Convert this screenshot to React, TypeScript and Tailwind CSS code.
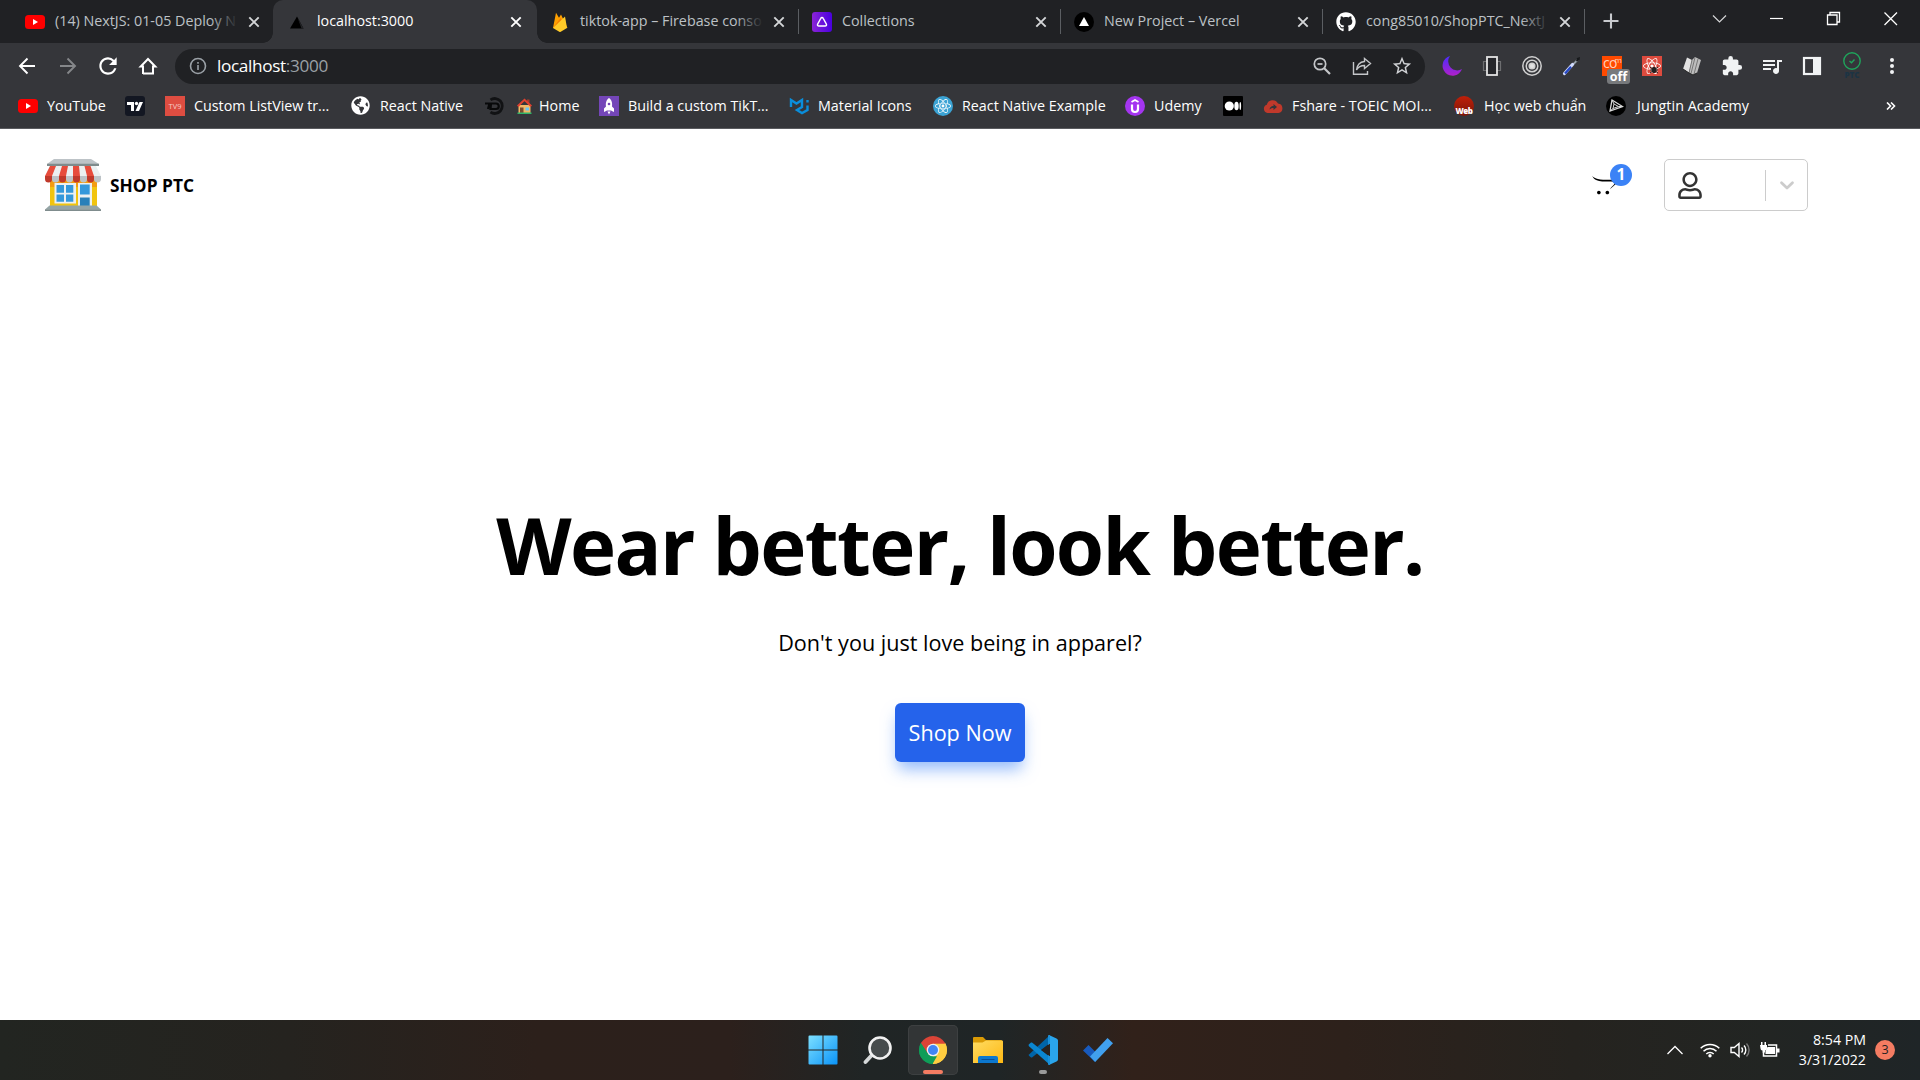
import type { ReactNode } from 'react';
import { FaGithub, FaOpencart, FaReact, FaRegUser, FaGlobeAmericas } from 'react-icons/fa';
import { MdExtension, MdOutlineQueueMusic, MdStarOutline, MdRefresh } from 'react-icons/md';

function YouTube() {
  return (
    <svg viewBox="0 0 20 20" className="size-5">
      <rect y="3" width="20" height="14" rx="3.5" fill="#f00" />
      <path d="M8 7v6l5-3z" fill="#fff" />
    </svg>
  );
}

function Firebase() {
  return (
    <svg viewBox="0 0 20 20" className="size-5">
      <path d="M3 16 6 0.8l3 5L11 2.6 17.5 16z" fill="#ffa000" />
      <path d="m3 16 7.500-10 2 3z" fill="#f57c00" />
      <path d="M3 16 15 4.500 17 16l-7 4.200z" fill="#ffca28" />
    </svg>
  );
}

function Appwrite() {
  return (
    <svg viewBox="0 0 20 20" className="size-5">
      <defs>
        <linearGradient id="collections">
          <stop stopColor="#8a24d6" />
          <stop offset="1" stopColor="#4a00e0" />
        </linearGradient>
      </defs>
      <rect width="20" height="20" rx="3" fill="url(#collections)" />
      <path d="M10 5.5c.7 0 1 .4 1.3 1l3 5.500c.6 1.200 0 2-1.200 2H6.900c-1.200 0-1.800-.8-1.200-2l3-5.500c.3-.6.600-1 1.300-1z" fill="none" stroke="#fff" strokeWidth="1.5" />
    </svg>
  );
}

function Triangle({ disc }: { disc?: boolean }) {
  return (
    <svg viewBox="0 0 20 20" className="size-5">
      {disc ? (
        <>
          <circle cx="10" cy="10" r="10" fill="#000" />
          <path d="m10 5 5 9H5z" fill="#fff" />
        </>
      ) : (
        <>
          <path d="M10 4.500 16.500 16.500H3z" fill="#000" />
          <path d="m10.500 5.500 6 11h-2z" fill="#232427" />
        </>
      )}
    </svg>
  );
}

function Cross({ color }: { color: string }) {
  return (
    <svg viewBox="0 0 12 12" className="size-3" stroke={color} strokeWidth="1.9">
      <path d="m1.300 1.300 9.400 9.400m0-9.400-9.400 9.400" />
    </svg>
  );
}

function Tab({ icon, title, active, fade, divider }: { icon: ReactNode; title: string; active?: boolean; fade?: boolean; divider?: boolean }) {
  return (
    <div className={active ? 'relative -ml-px flex h-[43px] w-[264px] items-center rounded-t-[10px] bg-[#35363a] pl-3.5' : 'relative flex h-[43px] w-[262px] items-center pl-[13px]'}>
      {active && (
        <>
          <div className="absolute -left-2.5 bottom-0 size-2.5 bg-[radial-gradient(circle_at_0_0,#202124_9.500px,#35363a_10px)]" />
          <div className="absolute -right-2.5 bottom-0 z-10 size-2.5 bg-[radial-gradient(circle_at_100%_0,#202124_9.500px,#35363a_10px)]" />
        </>
      )}
      {icon}
      <div className={`relative -top-px ml-2.5 w-[183px] whitespace-nowrap text-[14.300px] ${active ? 'text-white' : 'text-[#bdc1c6]'}`}>
        {title}
        {fade && <div className="absolute inset-y-0 right-0 w-7 bg-linear-to-r from-transparent to-[#202124]" />}
      </div>
      <div className="ml-[10px]">
        <Cross color={active ? '#fff' : '#d4d6d8'} />
      </div>
      {divider && <div className="absolute right-0 top-[9px] h-[25px] w-px bg-[#5b5e62]" />}
    </div>
  );
}

function TabStrip() {
  return (
    <div className="flex h-[43px] bg-[#202124] pl-3">
      <Tab icon={<YouTube />} title="(14) NextJS: 01-05 Deploy N" fade />
      <Tab icon={<Triangle />} title="localhost:3000" active />
      <Tab icon={<Firebase />} title="tiktok-app – Firebase conso" fade divider />
      <Tab icon={<Appwrite />} title="Collections" divider />
      <Tab icon={<Triangle disc />} title="New Project – Vercel" divider />
      <Tab icon={<FaGithub className="size-5 text-white" />} title="cong85010/ShopPTC_NextJ" fade divider />
      <svg viewBox="0 0 16 16" className="ml-[18px] mt-[13px] size-4" stroke="#c8cace" strokeWidth="2.100">
        <path d="M8 .5v15M.5 8h15" />
      </svg>
      <div className="ml-auto flex h-[38px] items-center pr-px">
        <svg viewBox="0 0 57 38" className="w-[57px]" fill="none" stroke="#d5d6d7" strokeWidth="1.200">
          <path d="m22 15.500 6.500 6.500 6.500-6.500" />
        </svg>
        <svg viewBox="0 0 57 38" className="w-[57px]" fill="none" stroke="#fff" strokeWidth="1.200">
          <path d="M22 18.500h13" />
        </svg>
        <svg viewBox="0 0 57 38" className="w-[57px]" fill="none" stroke="#fff" strokeWidth="1.300">
          <path d="M22.500 15h9.500v9.500h-9.500zM25 15v-2.500h9.500V22H32" />
        </svg>
        <svg viewBox="0 0 57 38" className="w-[57px]" fill="none" stroke="#fff" strokeWidth="1.300">
          <path d="m22.500 12.500 12.500 12.500m0-12.500L22.500 25" />
        </svg>
      </div>
    </div>
  );
}

function Slot({ children }: { children: ReactNode }) {
  return <div className="relative flex h-9 w-10 shrink-0 items-center justify-center">{children}</div>;
}

function Toolbar() {
  return (
    <div className="flex h-[46px] items-center bg-[#35363a] pl-2 pr-[7px]">
      <Slot>
        <svg viewBox="0 0 20 20" className="size-5" fill="none" stroke="#fff" strokeWidth="1.900"><path d="M17 10H2m7.500-7.500L2 10l7.500 7.500" /></svg>
      </Slot>
      <Slot>
        <svg viewBox="0 0 20 20" className="size-5" fill="none" stroke="#85878a" strokeWidth="1.900"><path d="M2 10h15M9.500 2.500 17 10l-7.500 7.500" /></svg>
      </Slot>
      <Slot><MdRefresh className="size-[26px] text-white" /></Slot>
      <Slot>
        <svg viewBox="0 0 20 20" className="size-5" fill="none" stroke="#fff" strokeWidth="2"><path d="M5 18V10.500H2.700L10 3l7.300 7.500H15V17.500H5z" /></svg>
      </Slot>
      <div className="ml-[7px] flex h-[35px] w-[1250px] items-center rounded-full bg-[#202124] pl-3.5 pr-[3px]">
        <svg viewBox="0 0 18 18" className="size-[18px]" fill="none" stroke="#9aa0a6" strokeWidth="1.600"><circle cx="9" cy="9" r="7.500" /><path d="M9 8v5M9 5v1.700" /></svg>
        <span className="ml-[10px] text-[17.200px] tracking-[-0.350px] text-white">localhost<span className="text-[#9aa0a6]">:3000</span></span>
        <div className="ml-auto flex">
          <Slot>
            <svg viewBox="0 0 20 20" className="size-5" fill="none" stroke="#c4c6c9" strokeWidth="1.700"><circle cx="8" cy="8" r="5.700" /><path d="m12 12 6 6" strokeWidth="2.200" /><path d="M5.500 8h5" /></svg>
          </Slot>
          <Slot>
            <svg viewBox="0 0 20 20" className="size-5" fill="none" stroke="#c4c6c9" strokeWidth="1.400"><path d="M1.500 6v12.300H15.500V15M12.500 2.500l6 5-6 5V9.500C9 9.500 6.500 10.500 4.500 14 5 9.500 7.500 6 12.500 5.500z" /></svg>
          </Slot>
          <Slot><MdStarOutline className="size-[22px] text-[#d0d2d5]" /></Slot>
        </div>
      </div>
      <div className="ml-[7px] flex">
        <Slot>
          <svg viewBox="0 0 20 20" className="size-5"><defs><linearGradient id="moon" x2="0" y2="1"><stop stopColor="#4b2cff" /><stop offset="1" stopColor="#b020c8" /></linearGradient></defs><path d="M8 0a10 10 0 1 0 12 13A9 9 0 0 1 8 0z" fill="url(#moon)" /></svg>
        </Slot>
        <Slot>
          <svg viewBox="0 0 20 20" className="size-5" fill="none"><path d="M5 5.500H1.500v9H5m10-9h3.500v9H15" stroke="#6d6e70" strokeWidth="1.200" /><rect x="5" y="1" width="10" height="18" fill="#25262a" stroke="#e4e4e4" strokeWidth="1.800" /></svg>
        </Slot>
        <Slot>
          <svg viewBox="0 0 20 20" className="size-5" fill="none" stroke="#d0d0d0" strokeWidth="1.500"><circle cx="10" cy="10" r="9.200" /><circle cx="10" cy="10" r="5.800" /><circle cx="10" cy="10" r="2.800" fill="#e2e2e2" /></svg>
        </Slot>
        <Slot>
          <svg viewBox="0 0 20 20" className="size-5"><path d="m11 8.500 5-5" stroke="#98a3ab" strokeWidth="1.800" /><path d="m14 5 1-3 3-1-.500 3-2.500 1.500z" fill="#17191b" /><path d="m2.500 17.500 8-9" stroke="#d2dcff" strokeWidth="3.200" strokeLinecap="round" /><path d="m3 17.500 6-6.800" stroke="#2447c5" strokeWidth="2.200" /></svg>
        </Slot>
        <Slot>
          <div className="relative size-5 bg-[#ff4a00] pl-px text-[14px] leading-[14px] tracking-[-0.800px] text-[#ffd0bd]">
            co
            <span className="absolute right-px top-0 text-[8px] leading-[8px]">m</span>
          </div>
          <div className="absolute left-[15px] top-[21px] h-[15px] w-[23px] rounded-[3px] bg-[#77797c] text-center text-[12.500px] font-bold leading-[15px] text-white">off</div>
        </Slot>
        <Slot>
          <div className="relative flex size-5 items-center justify-center bg-[#dd4b3e]">
            <FaReact className="size-[18px] text-white" />
            <svg viewBox="0 0 10 10" className="absolute bottom-0.5 right-[3px] size-2.5" stroke="#222" strokeWidth="1"><ellipse cx="5" cy="6" rx="2" ry="2.800" fill="#222" /><path d="m1 3 8 6M9 3 1 9M1 6h8" /></svg>
          </div>
        </Slot>
        <Slot>
          <svg viewBox="0 0 20 20" className="size-5"><path d="M5 1.500 10 4 7 17l-6-4z" fill="#e3e3e3" /><path d="m10 4 3-3 6 3-4 13-4 2-4-2z" fill="#bdbdbd" /><path d="m13 1.500-4 16M16 3l-4 15M10 4 7 17" stroke="#777" fill="none" /><path d="m1 13 6 4 4 2 4-2" stroke="#222" fill="none" /></svg>
        </Slot>
        <Slot><MdExtension className="size-[22px] text-[#f1f3f4]" /></Slot>
        <Slot><MdOutlineQueueMusic className="size-6 text-[#f1f3f4]" /></Slot>
        <Slot>
          <svg viewBox="0 0 20 20" className="size-5"><rect x="2" y="2" width="16" height="16" fill="none" stroke="#f1f3f4" strokeWidth="2.200" /><path d="M11 2h7v16h-7z" fill="#f1f3f4" /></svg>
        </Slot>
        <Slot>
          <div className="-mt-0.5 flex flex-col items-center">
            <svg viewBox="0 0 18 18" className="size-[18px]" fill="none" stroke="#1fa45b" strokeWidth="1.400"><circle cx="9" cy="9" r="8.200" /><path d="m6.500 9 2 1.800 3-3.300" /></svg>
            <span className="mt-px text-[8px] font-extrabold leading-[8px] text-[#1c3444]">PTC</span>
          </div>
        </Slot>
        <Slot>
          <svg viewBox="0 0 4 18" className="h-[18px] w-1" fill="#f1f3f4"><circle cx="2" cy="3" r="2" /><circle cx="2" cy="9" r="2" /><circle cx="2" cy="15" r="2" /></svg>
        </Slot>
      </div>
    </div>
  );
}

function Mark({ icon, width, children }: { icon: ReactNode; width: string; children?: ReactNode }) {
  return (
    <div className={`flex shrink-0 items-center whitespace-nowrap ${width}`}>
      <div className="mr-[9px] size-5">{icon}</div>
      {children}
    </div>
  );
}

function Bookmarks() {
  return (
    <div className="flex h-10 items-center border-b border-[#5a5b5f] bg-[#35363a] pb-[5px] pl-[18px] text-[14.300px] text-white">
      <Mark width="w-[107px]" icon={<YouTube />}>YouTube</Mark>
      <Mark width="w-10" icon={
        <svg viewBox="0 0 20 20" className="size-5"><rect width="20" height="20" rx="3" fill="#131722" /><path d="M2 6h7v9H6V9H2zM14.500 6H18l-4 9h-3.500z" fill="#fff" /><circle cx="11.500" cy="7.500" r="1.700" fill="#fff" /></svg>
      } />
      <Mark width="w-[186px]" icon={<div className="size-5 bg-[#de4d41] text-center text-[7.500px] leading-5 text-[#f6cbc7]">TV9</div>}>Custom ListView tr...</Mark>
      <Mark width="w-[134px]" icon={<FaGlobeAmericas className="size-[19px] text-white" />}>React Native</Mark>
      <Mark width="w-8" icon={
        <svg viewBox="0 0 20 20" className="size-5" fill="none"><path d="M5.500 3.800a7.500 7.500 0 1 1 0 12.400" stroke="#111214" strokeWidth="2.800" /><path d="M0 7.500h4.500l-1.500 5.500M6 7.500h5a2.700 2.700 0 0 1 0 5.500H5.500z" stroke="#08090a" strokeWidth="2.200" /></svg>
      } />
      <div className="flex w-[82px] shrink-0 items-center">
        <svg viewBox="0 0 15 16" className="mr-[7px] h-4 w-[15px]"><path d="M1.500 7h12v8h-12z" fill="#f2b765" /><path d="M10 1.500h2.500v4H10z" fill="#a33b2b" /><path d="M.7 8.300 7.500 1.800l6.800 6.500" fill="none" stroke="#e0402f" strokeWidth="2" /><path d="M3 9.500h3.500V15H3z" fill="#7b4a2d" /><path d="M8.500 9.500H12v3H8.500z" fill="#67c5f5" /><path d="M.5 14.500h14V16H.5z" fill="#2fb56a" /></svg>
        Home
      </div>
      <Mark width="w-[190px]" icon={
        <svg viewBox="0 0 20 20" className="size-5"><path d="M0 0h20v20H0z" fill="#7446b8" /><path d="M10 2c3 2 3.500 5.500 3 8.500l2 2V16l-3-1.500H8L5 16v-3.500l2-2C6.500 7.500 7 4 10 2zM8.500 15.500h3L10 18.500z" fill="#fff" /><circle cx="10" cy="8" r="1.300" fill="#7446b8" /></svg>
      }>Build a custom TikT...</Mark>
      <Mark width="w-36" icon={
        <svg viewBox="0 0 20 20" className="size-5" fill="none" stroke="#0a8edb" strokeWidth="2.400"><path d="M2 11V4l5.500 3.500L13 4v7l-5 3 5 3 5.500-3V9.500" /><path d="M18.500 4v2.500" /></svg>
      }>Material Icons</Mark>
      <Mark width="w-48" icon={<div className="flex size-5 items-center justify-center rounded-full bg-[#3ba3d4]"><FaReact className="size-4 text-white" /></div>}>React Native Example</Mark>
      <Mark width="w-[98px]" icon={
        <svg viewBox="0 0 20 20" className="size-5" fill="none" stroke="#fff"><circle cx="10" cy="10" r="10" fill="#a435f0" stroke="none" /><path d="M7 8.500v4.500a3 3 0 0 0 6 0V8.500" strokeWidth="2.200" /><path d="m6.500 6 3.500-2 3.500 2" strokeWidth="1.800" /></svg>
      }>Udemy</Mark>
      <Mark width="w-10" icon={
        <svg viewBox="0 0 20 20" className="size-5"><rect width="20" height="20" rx="1" fill="#000" /><circle cx="6.300" cy="10" r="4.600" fill="#fff" /><ellipse cx="13.500" cy="10" rx="2.200" ry="4.300" fill="#fff" /><ellipse cx="17.300" cy="10" rx=".8" ry="3.900" fill="#fff" /></svg>
      } />
      <Mark width="w-[191px]" icon={
        <svg viewBox="0 0 20 20" className="size-5"><path d="M4.500 17a4.300 4.300 0 0 1-.700-8.300A6 6 0 0 1 15 7.500 4.800 4.800 0 0 1 15.500 17z" fill="#c0392b" /><path d="M6.500 13.500c.5-2.500 2-3.500 4-3.500V8l3.500 3-3.500 3v-2c-1.500 0-3 .3-4 1.500z" fill="#35363a" /></svg>
      }>Fshare - TOEIC MOI...</Mark>
      <Mark width="w-[152px]" icon={
        <div className="flex size-5 items-end justify-center rounded-full bg-linear-to-b from-[#c01f08] to-[#7c1608]"><span className="text-[8px] font-extrabold leading-[11px] tracking-[-0.500px] text-white">Web</span></div>
      }><span className="pl-px">Học web chuẩn</span></Mark>
      <Mark width="w-[200px]" icon={
        <svg viewBox="0 0 20 20" className="size-5" fill="none" stroke="#d8d8d8" strokeWidth="1.300"><circle cx="10" cy="10" r="10" fill="#000" stroke="none" /><path d="m6 4 10.500 6.500L4 15z" /><path d="m8 8 4.500 2.500L7 12.500zM6 4l2 4m8.500 2.500h-4M4 15l3-2.500" strokeWidth="1" /></svg>
      }><span className="pl-0.5 tracking-[0.050px]">Jungtin Academy</span></Mark>
      <svg viewBox="0 0 10 8" className="ml-auto mr-6 h-2 w-2.5" fill="none" stroke="#fff" strokeWidth="1.600"><path d="m1 .5 3.500 3.500L1 7.500M5 .5 8.500 4 5 7.500" /></svg>
    </div>
  );
}

function Store() {
  return (
    <svg viewBox="0 0 56 52" className="h-[52px] w-14">
      <path d="M5 20h47v27H5z" fill="#f1c40f" />
      <path d="M5 20h47v8H5z" fill="#f39c12" />
      <path d="M9.500 24H31v20.500H9.500z" fill="#ecf0f1" />
      <path d="M11.500 26h7.500v7.700h-7.500zm9.500 0h7.300v7.700H21zm-9.500 9.400h7.500v7.300h-7.500zm9.500 0h7.300v7.300H21z" fill="#3498db" />
      <path d="M33 24h14v23H33z" fill="#ecf0f1" />
      <path d="M35 25.500h9.700v10H35z" fill="#3498db" />
      <path d="M35 38.500h9.700V47H35z" fill="#2980b9" />
      <path d="M4.500 46.500h47L56 50.500H0z" fill="#95a5a6" />
      <path d="M0 50.200h56V52H0z" fill="#7f8c8d" />
      <path d="M9 0h37l8 5H2z" fill="#bdc3c7" />
      <path d="M2 4.800h52V7H2z" fill="#7f8c8d" />
      <path d="M5 7h46l5 10H0z" fill="#ecf0f1" />
      <path d="M5 7h6L7 17H0zM17 7h6l-2 10h-7zM28 7h6l1 10h-7zM39.500 7h6L49 17h-7z" fill="#e74c3c" />
      <path d="M0 17h7v3a3.500 3.500 0 0 1-7 0zM14 17h7v3a3.500 3.500 0 0 1-7 0zM28 17h7v3a3.500 3.500 0 0 1-7 0zM42 17h7v3a3.500 3.500 0 0 1-7 0z" fill="#c0392b" />
      <path d="M7 17h7v3a3.500 3.500 0 0 1-7 0zM21 17h7v3a3.500 3.500 0 0 1-7 0zM35 17h7v3a3.500 3.500 0 0 1-7 0zM49 17h7v3a3.500 3.500 0 0 1-7 0z" fill="#bdc3c7" />
    </svg>
  );
}

function Page() {
  return (
    <div className="flex flex-1 flex-col bg-white text-black">
      <header className="mt-[30px] flex h-[52px] items-center pl-[45px] pr-28">
        <Store />
        <span className="ml-[9px] pt-px text-[17.300px] font-bold tracking-[0.050px]">SHOP PTC</span>
        <div className="relative ml-auto mr-[46px] h-[26px] w-[26px]">
          <FaOpencart className="size-[26px]" />
          <div className="absolute left-[18px] top-[-8px] flex size-[22px] items-center justify-center rounded-full bg-[#3b82f6] text-[15.500px] font-bold text-white">1</div>
        </div>
        <div className="flex h-[52px] w-36 items-center rounded-[5px] border border-[#ccc] pl-[13px]">
          <FaRegUser className="h-[27px] w-6 text-[#333]" />
          <div className="ml-auto h-[31px] w-px bg-[#ccc]" />
          <svg viewBox="0 0 20 20" className="ml-[10px] mr-[9px] size-[22px]" fill="none" stroke="#ccc" strokeWidth="2.500" strokeLinecap="round" strokeLinejoin="round"><path d="m5 8 5 4.800L15 8" /></svg>
        </div>
      </header>
      <main className="flex flex-col items-center">
        <h1 className="mt-[284px] whitespace-nowrap text-[78px] font-bold leading-[100px] tracking-[-1.600px]">Wear better, look better.</h1>
        <p className="mt-[33px] text-[21.600px] leading-[30px]">Don&apos;t you just love being in apparel?</p>
        <button className="mt-[45px] h-[59px] w-[130px] whitespace-nowrap rounded-md bg-[#2563eb] pt-0.5 text-[21.600px] text-white shadow-[0_10px_16px_-3px_rgba(59,130,246,0.550)]">Shop Now</button>
      </main>
    </div>
  );
}

function TaskSlot({ children, active, marker }: { children: ReactNode; active?: boolean; marker?: string }) {
  return (
    <div className={`relative mx-[2.500px] flex size-[50px] items-center justify-center rounded-[5px] ${active ? 'bg-[#323536] ring-1 ring-inset ring-[#3d4041]' : ''}`}>
      {children}
      {marker && <div className={`absolute bottom-px h-1 rounded-full ${marker}`} />}
    </div>
  );
}

function Taskbar() {
  return (
    <div className="flex h-[60px] items-center bg-[linear-gradient(90deg,#222521_0%,#25231f_15%,#2c201b_28%,#2c201c_38%,#202525_45%,#1f2526_52%,#31211a_59%,#2d211b_70%,#25231f_82%,#222523_92%,#1f2527_100%)] text-white">
      <div className="ml-[795.500px] flex">
        <TaskSlot>
          <svg viewBox="0 0 30 30" className="size-[30px]"><defs><linearGradient id="win" x2="1" y2="1"><stop stopColor="#7de0ff" /><stop offset="1" stopColor="#0a93f8" /></linearGradient></defs><path d="M.5 1.500a1 1 0 0 1 1-1h13v14H.500zM15.500.500h13a1 1 0 0 1 1 1v13h-14zM.500 15.500h14v14h-13a1 1 0 0 1-1-1zM15.500 15.500h14v13a1 1 0 0 1-1 1h-13z" fill="url(#win)" /></svg>
        </TaskSlot>
        <TaskSlot>
          <svg viewBox="0 0 30 30" className="size-[30px]" fill="none"><path d="m8.500 20.500-6 6.500" stroke="#d6d9da" strokeWidth="3.800" strokeLinecap="round" /><circle cx="17" cy="13" r="10.500" fill="#464b4c" stroke="#f1f1f1" strokeWidth="2.600" /></svg>
        </TaskSlot>
        <TaskSlot active marker="w-5 bg-[#f47c62]">
          <svg viewBox="0 0 28 28" className="size-7">
            <path d="M14 14 1.880 7A14 14 0 0 1 26.120 7z" fill="#db4437" />
            <path d="M14 14 26.120 7A14 14 0 0 1 14 28z" fill="#ffcd40" />
            <path d="M14 14v14A14 14 0 0 1 1.880 7z" fill="#0f9d58" />
            <path d="M14 7.700h12.500L26.120 7h-24.300L8.500 17.200z" fill="#db4437" />
            <path d="m19.500 17.200-6 10.800H14A14 14 0 0 0 26.500 7.700H14z" fill="#ffcd40" />
            <path d="m1.880 7 6.600 10.200L14 20.300h4L13.500 28A14 14 0 0 1 1.880 7z" fill="#0f9d58" />
            <circle cx="14" cy="14" r="6.300" fill="#f1f1f1" />
            <circle cx="14" cy="14" r="5" fill="#4285f4" />
          </svg>
        </TaskSlot>
        <TaskSlot>
          <svg viewBox="0 0 30 28" className="h-7 w-[30px]"><defs><linearGradient id="folder" x2="1" y2="1"><stop stopColor="#ffdc62" /><stop offset="1" stopColor="#fdb813" /></linearGradient></defs><path d="M0 2a1 1 0 0 1 1-1h9l3 3h15a1 1 0 0 1 1 1v5H0z" fill="#d99a05" /><path d="M0 6.500h9.500L13 4.500h16a1 1 0 0 1 1 1V27H0z" fill="url(#folder)" /><path d="M5 27v-5a2 2 0 0 1 2-2h16a2 2 0 0 1 2 2v5z" fill="#0c78cf" /><path d="M8.500 23.500h13" stroke="#074f98" /></svg>
        </TaskSlot>
        <TaskSlot marker="w-2 bg-[#9a9a9a]">
          <svg viewBox="0 0 30 30" className="size-[30px]"><path d="M1 19.500 22 0v8L4 22.500H3l-2.300-2z" fill="#0065a9" /><path d="M.700 9.500 3 7.500h1L22 22v8L.700 11z" fill="#0a86d1" /><path d="m21.500.200 7 3.300c1 .5 1.500 1.200 1.500 2.200v18.600c0 1-.5 1.700-1.500 2.200l-7 3.300c-.8.300-1.300.200-1.300-.6V.800c0-.7.500-.9 1.300-.6z" fill="#2aa5ec" /><path d="M22 8.500v13L13 15z" fill="#272320" /><path d="M20.200 1.500 22 .2v8.300l-1.800 1.300zM20.200 20.200l1.800 1.300V30l-1.800-1.500z" fill="#1a8fd8" /></svg>
        </TaskSlot>
        <TaskSlot>
          <svg viewBox="0 0 30 26" className="h-[26px] w-[30px]"><path d="m0 13.500 5.500-5.500L15 17.500l-3 7.500z" fill="#185abd" /><path d="m7 19.500 17.500-18.500 5.500 5.300L12.200 25z" fill="#41a0ee" /></svg>
        </TaskSlot>
      </div>
      <div className="ml-auto flex items-center pr-[25px]">
        <svg viewBox="0 0 16 10" className="mr-[17px] h-2.5 w-4" fill="none" stroke="#fff" strokeWidth="1.300"><path d="m.5 9 7.500-7.500L15.500 9" /></svg>
        <svg viewBox="0 0 20 16" className="mr-[10px] h-4 w-5" fill="none" stroke="#fff" strokeWidth="1.500"><path d="M.7 6.300a13 13 0 0 1 18.600 0M3.500 9.200a9 9 0 0 1 13 0M6.300 12a5.200 5.200 0 0 1 7.400 0" /><circle cx="10" cy="13.800" r="1.700" fill="#fff" stroke="none" /></svg>
        <svg viewBox="0 0 20 18" className="mr-[10px] h-[18px] w-5" fill="none" stroke="#fff" strokeWidth="1.400"><path d="M1 6.500h3.300L9 2.500v13l-4.700-4H1z" /><path d="M11.500 6.500a3.500 3.500 0 0 1 0 5M14 4.500a6.500 6.500 0 0 1 0 9" /><path d="M16.500 2.500a9.500 9.500 0 0 1 0 13" stroke="#777" /></svg>
        <svg viewBox="0 0 20 16" className="h-4 w-5" fill="none" stroke="#fff" strokeWidth="1.500"><path d="M8 3h8.500v11h-13V10" /><path d="M7.500 5H15v7H5.500V9z" fill="#fff" stroke="none" /><path d="M17 6.500h2.500v4H17z" fill="#fff" stroke="none" /><path d="M0 3h7v3.500a2 2 0 0 1-2 2v2H2.500v-2a2 2 0 0 1-2-2zM1 0h1.500v3H1zM4.500 0H6v3H4.500z" fill="#fff" stroke="none" /></svg>
        <div className="ml-[19px] mr-[9px] text-right text-[14.200px] leading-5">
          <div>8:54 PM</div>
          <div>3/31/2022</div>
        </div>
        <div className="flex size-5 items-center justify-center rounded-full bg-[#f47c62] text-[12.500px] text-[#222]">3</div>
      </div>
    </div>
  );
}

export default function App() {
  return (
    <div className="flex h-[1080px] w-[1920px] flex-col overflow-hidden font-['Open_Sans','Noto_Sans',sans-serif]">
      <TabStrip />
      <Toolbar />
      <Bookmarks />
      <Page />
      <Taskbar />
    </div>
  );
}
